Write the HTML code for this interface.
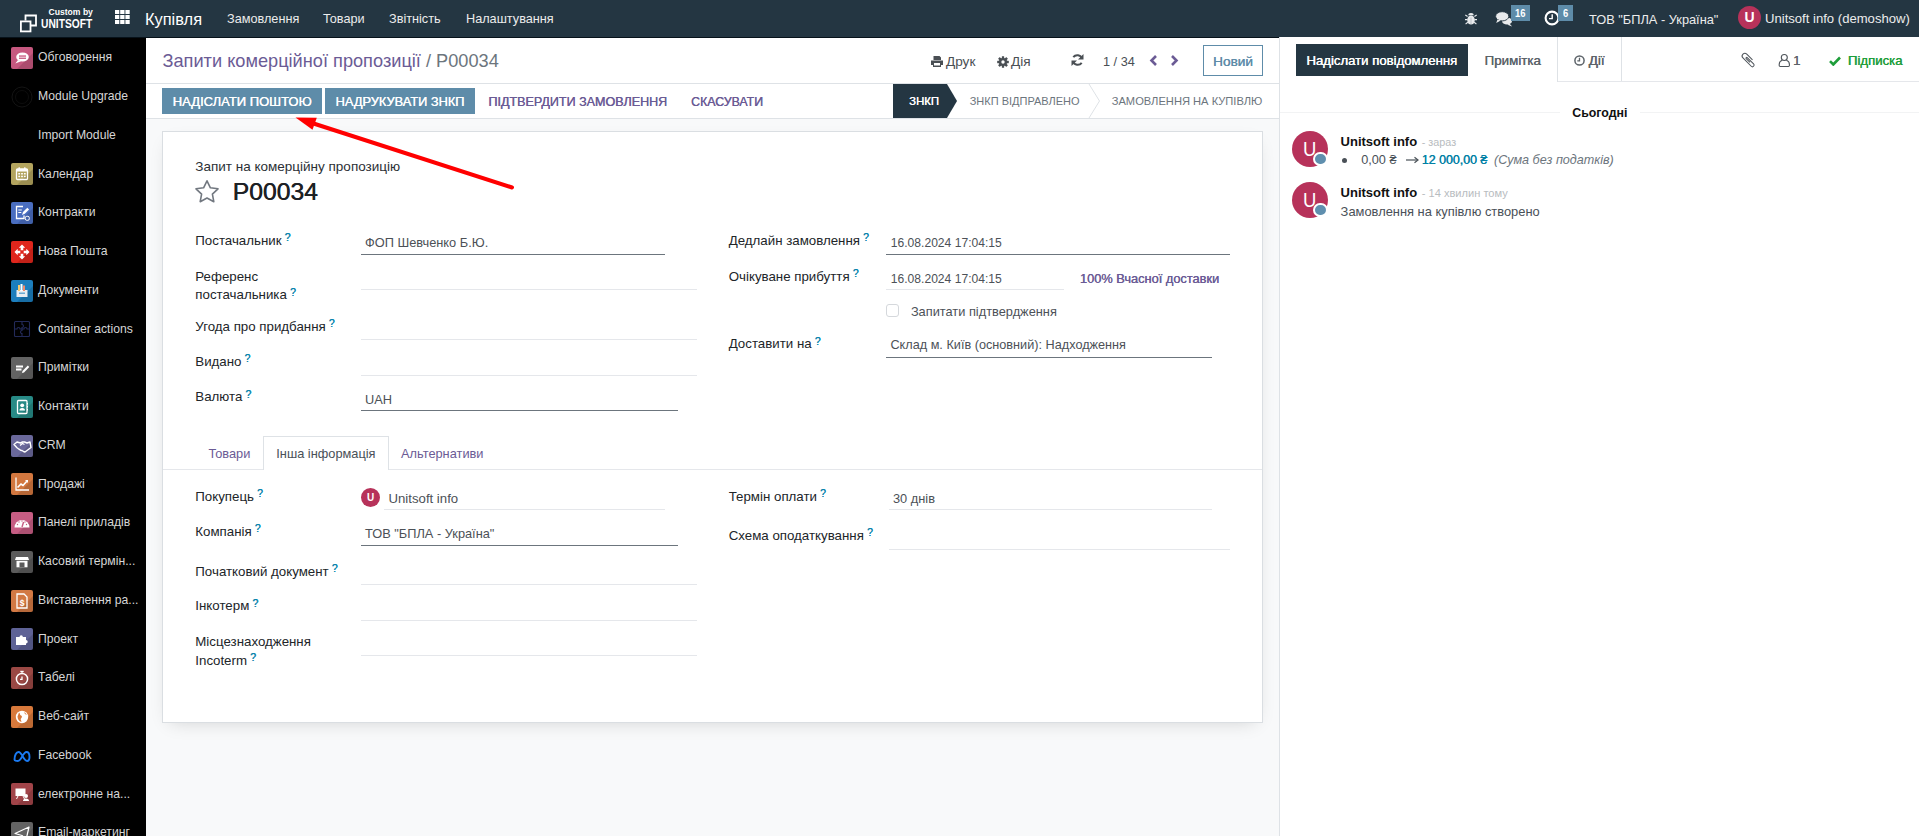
<!DOCTYPE html>
<html><head><meta charset="utf-8"><style>*{box-sizing:border-box;margin:0;padding:0}
html,body{width:1919px;height:836px;overflow:hidden;background:#fff;font-family:"Liberation Sans",sans-serif;font-size:13px;color:#212529}
.t{position:absolute;white-space:nowrap}
.q{position:relative;top:-0.5px;text-shadow:0.35px 0 0 #0a85ad;color:#0a85ad;font-size:10.5px;vertical-align:top;margin-left:3px;font-weight:normal;line-height:1}
</style></head><body>
<div class="t" style="left:0px;top:0px;width:1919px;height:37px;background:#243642;"></div>
<div class="t" style="left:0px;top:37px;width:146px;height:799px;background:#000;"></div>
<div class="t" style="left:146px;top:37px;width:1133px;height:799px;background:#f8f9fa;"></div>
<div class="t" style="left:146px;top:37px;width:1133px;height:82px;background:#fff;"></div>
<div class="t" style="left:146px;top:83px;width:1133px;height:1px;background:#dee2e6;"></div>
<div class="t" style="left:146px;top:118px;width:1133px;height:1px;background:#dee2e6;"></div>
<div class="t" style="left:0px;top:37px;width:1919px;height:1px;background:#07121a;"></div>
<div class="t" style="left:162px;top:131px;width:1101px;height:592px;background:#fff;border:1px solid #dadee2;box-shadow:0 6px 18px -8px rgba(0,0,0,.18)"></div>
<div class="t" style="left:1279px;top:37px;width:640px;height:799px;background:#fff;"></div>
<div class="t" style="left:1279px;top:37px;width:1px;height:799px;background:#dee2e6;"></div>
<div class="t" style="left:48.5px;top:7px;font-size:8.6px;font-weight:bold;color:#fff">Custom by</div>
<div class="t" style="left:40.5px;top:16px;font-size:12.8px;font-weight:bold;color:#fff;transform:scaleX(.8);transform-origin:0 0">UNITSOFT</div>
<svg class="t" style="left:19px;top:14px" width="19" height="19" viewBox="0 0 19 19"><path d="M6.5 6.5V1.5h10.5v10h-5" fill="none" stroke="#fff" stroke-width="1.8"/><rect x="1.9" y="7.4" width="9.6" height="10" fill="none" stroke="#fff" stroke-width="1.8"/></svg>
<svg class="t" style="left:115px;top:10px" width="15" height="15" viewBox="0 0 15 15"><g fill="#fff"><rect x="0.0" y="0.0" width="4.3" height="4" /><rect x="5.2" y="0.0" width="4.3" height="4" /><rect x="10.4" y="0.0" width="4.3" height="4" /><rect x="0.0" y="5.0" width="4.3" height="4" /><rect x="5.2" y="5.0" width="4.3" height="4" /><rect x="10.4" y="5.0" width="4.3" height="4" /><rect x="0.0" y="10.0" width="4.3" height="4" /><rect x="5.2" y="10.0" width="4.3" height="4" /><rect x="10.4" y="10.0" width="4.3" height="4" /></g></svg>
<div class="t" style="left:145px;top:9.91px;font-size:16.4px;color:#fff;">Купівля</div>
<div class="t" style="left:227px;top:11.62px;font-size:12.7px;color:#ececec;">Замовлення</div>
<div class="t" style="left:323px;top:11.62px;font-size:12.7px;color:#ececec;">Товари</div>
<div class="t" style="left:389px;top:11.62px;font-size:12.7px;color:#ececec;">Звітність</div>
<div class="t" style="left:466px;top:11.62px;font-size:12.7px;color:#ececec;">Налаштування</div>
<svg class="t" style="left:1465px;top:12px" width="12" height="13" viewBox="0 0 12 13"><g fill="#e8eaec"><ellipse cx="6" cy="8" rx="3.8" ry="4.6"/><path d="M3.3 3.2a2.7 2.2 0 015.4 0z"/><path d="M0 7h2.5v1.2H0zM9.5 7H12v1.2H9.5zM.3 11.6L2.6 9.8l.6.9-2.3 1.8zM11.7 11.6L9.4 9.8l-.6.9 2.3 1.8zM.6 2.6l2.3 1.5-.6.9L0 3.5zM11.4 2.6L9.1 4.1l.6.9L12 3.5z"/></g><rect x="5.5" y="5.5" width="1" height="6.5" fill="#b9bec3"/></svg>
<svg class="t" style="left:1495px;top:11px" width="18" height="16" viewBox="0 0 18 16"><g fill="#e8eaec"><ellipse cx="12" cy="10" rx="5" ry="3.6"/><path d="M14.5 12.5l2.6 3-4.6-1.8z"/><ellipse cx="7.2" cy="5.3" rx="6.6" ry="4.6" stroke="#243642" stroke-width="0.9"/><path d="M2.5 8.5L1.2 12 5.8 9.6z"/></g></svg>
<div class="t" style="left:1511px;top:5px;width:19px;height:16px;background:#5e8ca9;"></div>
<div class="t" style="left:1515.3px;top:7.2px;font-size:11.5px;font-weight:bold;color:#fff;transform:scaleX(.82);transform-origin:0 0">16</div>
<svg class="t" style="left:1544px;top:10px" width="16" height="16" viewBox="0 0 16 16"><circle cx="8" cy="8" r="6.4" fill="none" stroke="#fff" stroke-width="2.1"/><path d="M8.2 4.2v4.4H5" fill="none" stroke="#fff" stroke-width="1.4"/></svg>
<div class="t" style="left:1558px;top:5px;width:15px;height:16px;background:#5e8ca9;"></div>
<div class="t" style="left:1562.6px;top:7.2px;font-size:11.5px;font-weight:bold;color:#fff;transform:scaleX(.82);transform-origin:0 0">6</div>
<div class="t" style="left:1589px;top:11.52px;font-size:12.8px;color:#ececec;">ТОВ "БПЛА - Україна"</div>
<div class="t" style="left:1738px;top:6px;width:23px;height:23px;border-radius:50%;background:#b7325a;color:#fff;font-size:14px;font-weight:bold;text-align:center;line-height:23px">U</div>
<div class="t" style="left:1765px;top:11.25px;font-size:13.1px;color:#ececec;">Unitsoft info (demoshow)</div>
<div class="t" style="left:11px;top:47.0px;width:22px;height:22px;border-radius:2px;overflow:hidden;background:#c6587f;"><svg width="22" height="22" viewBox="0 0 22 22" style="display:block"><path d="M22 6L6 22h16z" fill="rgba(0,0,0,.13)"/><ellipse cx="11.5" cy="10" rx="6.3" ry="4.6" fill="#fff"/><path d="M7 13l-2.6 3.6 5.6-2.4z" fill="#fff"/><rect x="8" y="8.4" width="7" height="1.3" fill="#c6587f"/><rect x="8" y="10.6" width="7" height="1.3" fill="#c6587f"/></svg></div>
<div class="t" style="left:38px;top:50.28px;font-size:12.2px;color:#d6d6d6;">Обговорення</div>
<div class="t" style="left:11px;top:85.8px;width:22px;height:22px;border-radius:2px;overflow:hidden;"><svg width="22" height="22" viewBox="0 0 22 22" style="display:block"><circle cx="11" cy="11" r="10" fill="none" stroke="#141414" stroke-width="1"/><circle cx="11" cy="11" r="6.5" fill="none" stroke="#101010" stroke-width="0.8"/></svg></div>
<div class="t" style="left:38px;top:89.04px;font-size:12.2px;color:#d6d6d6;">Module Upgrade</div>
<div class="t" style="left:11px;top:124.5px;width:22px;height:22px;border-radius:2px;overflow:hidden;"></div>
<div class="t" style="left:38px;top:127.80px;font-size:12.2px;color:#d6d6d6;">Import Module</div>
<div class="t" style="left:11px;top:163.3px;width:22px;height:22px;border-radius:2px;overflow:hidden;background:#b3a45e;"><svg width="22" height="22" viewBox="0 0 22 22" style="display:block"><path d="M22 6L6 22h16z" fill="rgba(0,0,0,.13)"/><rect x="5.5" y="6" width="11" height="10.5" rx="1" fill="none" stroke="#fff" stroke-width="1.3"/><rect x="5.5" y="6" width="11" height="2.5" fill="#fff"/><g fill="#fff"><rect x="7.3" y="10" width="1.8" height="1.5"/><rect x="10.1" y="10" width="1.8" height="1.5"/><rect x="12.9" y="10" width="1.8" height="1.5"/><rect x="7.3" y="12.7" width="1.8" height="1.5"/><rect x="10.1" y="12.7" width="1.8" height="1.5"/><rect x="12.9" y="12.7" width="1.8" height="1.5"/></g><rect x="7.5" y="4.3" width="1.4" height="2.5" fill="#fff"/><rect x="13.1" y="4.3" width="1.4" height="2.5" fill="#fff"/></svg></div>
<div class="t" style="left:38px;top:166.56px;font-size:12.2px;color:#d6d6d6;">Календар</div>
<div class="t" style="left:11px;top:202.0px;width:22px;height:22px;border-radius:2px;overflow:hidden;background:#4a6ec0;"><svg width="22" height="22" viewBox="0 0 22 22" style="display:block"><path d="M22 6L6 22h16z" fill="rgba(0,0,0,.13)"/><path d="M12 4.5H5.5v12H13v-3" fill="none" stroke="#fff" stroke-width="1.3"/><path d="M7.3 8h3.5M7.3 10.5h3" stroke="#fff" stroke-width="1.2"/><path d="M11 13l1-3 4.3-4.3 1.8 1.8-4.3 4.3z" fill="#fff"/><rect x="14.3" y="14.3" width="4" height="4" rx="1.5" fill="none" stroke="#fff" stroke-width="1"/></svg></div>
<div class="t" style="left:38px;top:205.32px;font-size:12.2px;color:#d6d6d6;">Контракти</div>
<div class="t" style="left:11px;top:240.8px;width:22px;height:22px;border-radius:2px;overflow:hidden;background:#df261c;"><svg width="22" height="22" viewBox="0 0 22 22" style="display:block"><path d="M22 6L6 22h16z" fill="rgba(0,0,0,.13)"/><path d="M11 3.5l3.2 3.2H12.3v2.6h-2.6V6.7H7.8zM11 18.5l-3.2-3.2h1.9v-2.6h2.6v2.6h1.9zM3.5 11l3.2-3.2v1.9h2.6v2.6H6.7v1.9zM18.5 11l-3.2 3.2v-1.9h-2.6V9.7h2.6V7.8z" fill="#fff"/></svg></div>
<div class="t" style="left:38px;top:244.08px;font-size:12.2px;color:#d6d6d6;">Нова Пошта</div>
<div class="t" style="left:11px;top:279.6px;width:22px;height:22px;border-radius:2px;overflow:hidden;background:#1c7ebd;"><svg width="22" height="22" viewBox="0 0 22 22" style="display:block"><path d="M22 6L6 22h16z" fill="rgba(0,0,0,.13)"/><rect x="5.5" y="10" width="11" height="7" fill="#e9edf2"/><rect x="7" y="5" width="2" height="6" fill="#f6c96c"/><rect x="9.5" y="4" width="2" height="7" fill="#fff"/><rect x="12" y="5.5" width="2" height="5.5" fill="#f28b6a"/><rect x="8" y="12.5" width="6" height="1.5" fill="#1c7ebd" opacity=".6"/></svg></div>
<div class="t" style="left:38px;top:282.84px;font-size:12.2px;color:#d6d6d6;">Документи</div>
<div class="t" style="left:11px;top:318.3px;width:22px;height:22px;border-radius:2px;overflow:hidden;"><svg width="22" height="22" viewBox="0 0 22 22" style="display:block"><g fill="none" stroke="#232a58" stroke-width="1.1"><rect x="3.5" y="3.5" width="15" height="15" rx="1"/><path d="M11 3.5V6.5a1.5 1.5 0 010 3V11H9a1.5 1.5 0 00-3 0H3.5"/><path d="M11 18.5V15.5a1.5 1.5 0 010-3V11h2a1.5 1.5 0 013 0h2.5"/></g></svg></div>
<div class="t" style="left:38px;top:321.60px;font-size:12.2px;color:#d6d6d6;">Container actions</div>
<div class="t" style="left:11px;top:357.1px;width:22px;height:22px;border-radius:2px;overflow:hidden;background:#636363;"><svg width="22" height="22" viewBox="0 0 22 22" style="display:block"><path d="M22 6L6 22h16z" fill="rgba(0,0,0,.13)"/><path d="M5 9.5h7M5 12.5h5.5" stroke="#fff" stroke-width="1.8"/><path d="M11.5 14l5.3-5.5 1.5 1.5-5.3 5.5-2 .5z" fill="#fff"/></svg></div>
<div class="t" style="left:38px;top:360.36px;font-size:12.2px;color:#d6d6d6;">Примітки</div>
<div class="t" style="left:11px;top:395.8px;width:22px;height:22px;border-radius:2px;overflow:hidden;background:#278a86;"><svg width="22" height="22" viewBox="0 0 22 22" style="display:block"><path d="M22 6L6 22h16z" fill="rgba(0,0,0,.13)"/><rect x="6.5" y="4.5" width="9.5" height="13" rx="1" fill="none" stroke="#fff" stroke-width="1.3"/><circle cx="11.2" cy="9.3" r="1.9" fill="#fff"/><path d="M8.4 14.5a2.8 2.6 0 015.6 0z" fill="#fff"/><path d="M16.5 7v1.5M16.5 10v1.5M16.5 13v1.5" stroke="#fff" stroke-width="1"/></svg></div>
<div class="t" style="left:38px;top:399.12px;font-size:12.2px;color:#d6d6d6;">Контакти</div>
<div class="t" style="left:11px;top:434.6px;width:22px;height:22px;border-radius:2px;overflow:hidden;background:#6a689a;"><svg width="22" height="22" viewBox="0 0 22 22" style="display:block"><path d="M22 6L6 22h16z" fill="rgba(0,0,0,.13)"/><path d="M3 9.5l3-2.5 3.5 1 2-1h2l2.5 1 3-1 1 5.5-6 4.5-1.5-.5-1.5-1-1.5-.3-1.5-1-2-1.5z" fill="none" stroke="#fff" stroke-width="1.4" stroke-linejoin="round"/><path d="M9 10.5l2.5-2 2 1" fill="none" stroke="#fff" stroke-width="1.3"/></svg></div>
<div class="t" style="left:38px;top:437.88px;font-size:12.2px;color:#d6d6d6;">CRM</div>
<div class="t" style="left:11px;top:473.4px;width:22px;height:22px;border-radius:2px;overflow:hidden;background:#d2773f;"><svg width="22" height="22" viewBox="0 0 22 22" style="display:block"><path d="M22 6L6 22h16z" fill="rgba(0,0,0,.13)"/><path d="M5 4.5v12.5h13" fill="none" stroke="#fff" stroke-width="1.3"/><path d="M6.5 14.5l3.5-3.5 2 1.5 3.8-4.3" fill="none" stroke="#fff" stroke-width="1.6"/><path d="M14 7h3v3z" fill="#fff"/></svg></div>
<div class="t" style="left:38px;top:476.64px;font-size:12.2px;color:#d6d6d6;">Продажі</div>
<div class="t" style="left:11px;top:512.1px;width:22px;height:22px;border-radius:2px;overflow:hidden;background:#c65d83;"><svg width="22" height="22" viewBox="0 0 22 22" style="display:block"><path d="M22 6L6 22h16z" fill="rgba(0,0,0,.13)"/><path d="M3.5 15.5a7.5 7.5 0 0115 0z" fill="#fff"/><path d="M11 15l1.6-5" stroke="#c65d83" stroke-width="1.4"/><g fill="#c65d83"><circle cx="6.5" cy="12.5" r=".7"/><circle cx="8" cy="10" r=".7"/><circle cx="11" cy="9" r=".7"/><circle cx="15.5" cy="12.5" r=".7"/><circle cx="14" cy="10" r=".7"/></g></svg></div>
<div class="t" style="left:38px;top:515.40px;font-size:12.2px;color:#d6d6d6;">Панелі приладів</div>
<div class="t" style="left:11px;top:550.9px;width:22px;height:22px;border-radius:2px;overflow:hidden;background:#5b5b5b;"><svg width="22" height="22" viewBox="0 0 22 22" style="display:block"><path d="M22 6L6 22h16z" fill="rgba(0,0,0,.13)"/><path d="M5 6h12l1 3H4z" fill="#fff"/><rect x="5.5" y="9.8" width="11" height="6.5" fill="#fff"/><rect x="8.5" y="11.5" width="5" height="4.8" fill="#5b5b5b"/></svg></div>
<div class="t" style="left:38px;top:554.16px;font-size:12.2px;color:#d6d6d6;">Касовий термін...</div>
<div class="t" style="left:11px;top:589.6px;width:22px;height:22px;border-radius:2px;overflow:hidden;background:#d27944;"><svg width="22" height="22" viewBox="0 0 22 22" style="display:block"><path d="M22 6L6 22h16z" fill="rgba(0,0,0,.13)"/><path d="M6 4h7l3 3v11H6z" fill="none" stroke="#fff" stroke-width="1.3"/><text x="11" y="15.5" font-size="8.5" font-weight="bold" fill="#fff" text-anchor="middle" font-family="Liberation Sans">$</text></svg></div>
<div class="t" style="left:38px;top:592.92px;font-size:12.2px;color:#d6d6d6;">Виставлення ра...</div>
<div class="t" style="left:11px;top:628.4px;width:22px;height:22px;border-radius:2px;overflow:hidden;background:#5e6296;"><svg width="22" height="22" viewBox="0 0 22 22" style="display:block"><path d="M22 6L6 22h16z" fill="rgba(0,0,0,.13)"/><path d="M5 9h3.5a1.7 1.7 0 113.4 0H15v3a1.7 1.7 0 110 3.4V17H5z" fill="#fff"/></svg></div>
<div class="t" style="left:38px;top:631.68px;font-size:12.2px;color:#d6d6d6;">Проект</div>
<div class="t" style="left:11px;top:667.2px;width:22px;height:22px;border-radius:2px;overflow:hidden;background:#9a4844;"><svg width="22" height="22" viewBox="0 0 22 22" style="display:block"><path d="M22 6L6 22h16z" fill="rgba(0,0,0,.13)"/><circle cx="11" cy="12" r="5.6" fill="none" stroke="#fff" stroke-width="1.5"/><rect x="9.3" y="3.8" width="3.4" height="1.4" fill="#fff"/><path d="M11 5.2v1.2" stroke="#fff" stroke-width="1.3"/><path d="M11 9.5v2.8h-2" fill="none" stroke="#fff" stroke-width="1.3"/></svg></div>
<div class="t" style="left:38px;top:670.44px;font-size:12.2px;color:#d6d6d6;">Табелі</div>
<div class="t" style="left:11px;top:705.9px;width:22px;height:22px;border-radius:2px;overflow:hidden;background:#d8793b;"><svg width="22" height="22" viewBox="0 0 22 22" style="display:block"><path d="M22 6L6 22h16z" fill="rgba(0,0,0,.13)"/><circle cx="11" cy="11" r="6.2" fill="#fff"/><path d="M8 6.5c1.5 1 .5 2.5 2 3s1 2 0 3 .5 2 .5 3.5c-2.5-.5-4-3-4-5.5z M13.5 6c-.5 1.5 1 2.5 2.5 3" fill="#d8793b"/></svg></div>
<div class="t" style="left:38px;top:709.20px;font-size:12.2px;color:#d6d6d6;">Веб-сайт</div>
<div class="t" style="left:11px;top:744.7px;width:22px;height:22px;border-radius:2px;overflow:hidden;"><svg width="22" height="22" viewBox="0 0 22 22" style="display:block"><path d="M3.5 14.5c0-4 1.7-7.5 4-7.5 2.5 0 4.5 5 5.5 6.5s2 2.5 3 2.5c1.5 0 2.5-1.5 2.5-4s-1-5-3-5c-2.5 0-4.5 5-5.5 6.5s-2 2.5-3 2.5c-2 0-3.5-.5-3.5-1.5z" fill="none" stroke="#1a7af2" stroke-width="1.9"/></svg></div>
<div class="t" style="left:38px;top:747.96px;font-size:12.2px;color:#d6d6d6;">Facebook</div>
<div class="t" style="left:11px;top:783.4px;width:22px;height:22px;border-radius:2px;overflow:hidden;background:#a14449;"><svg width="22" height="22" viewBox="0 0 22 22" style="display:block"><path d="M22 6L6 22h16z" fill="rgba(0,0,0,.13)"/><rect x="4.5" y="5.5" width="10" height="7.5" fill="#fff"/><path d="M7 13l-1.5 3M12 13l1.5 3" stroke="#fff" stroke-width="1"/><circle cx="15" cy="13" r="2" fill="#fff"/><path d="M12 18a3 2.5 0 016 0z" fill="#fff"/></svg></div>
<div class="t" style="left:38px;top:786.72px;font-size:12.2px;color:#d6d6d6;">електронне на...</div>
<div class="t" style="left:11px;top:822.2px;width:22px;height:22px;border-radius:2px;overflow:hidden;background:#636363;"><svg width="22" height="22" viewBox="0 0 22 22" style="display:block"><path d="M22 6L6 22h16z" fill="rgba(0,0,0,.13)"/><path d="M4 11.5L18 5l-3 13-4-4.5z M11 13.5V17l1.8-2" fill="none" stroke="#fff" stroke-width="1.2" stroke-linejoin="round"/></svg></div>
<div class="t" style="left:38px;top:825.48px;font-size:12.2px;color:#d6d6d6;">Email-маркетинг</div>
<div class="t" style="left:162.5px;top:50.76px;font-size:18.2px;color:#6b5b95;">Запити комерційної пропозиції <span style="color:#6c757d">/ P00034</span></div>
<svg class="t" style="left:931px;top:56px" width="12" height="11" viewBox="0 0 12 11"><path d="M2.5 0h6l1.5 1.5V4h-7.5z M0 4.5h12v4.5h-2V11H2V9H0z" fill="#4a4f54"/><rect x="3" y="7" width="6" height="2.5" fill="#fff"/></svg>
<div class="t" style="left:946px;top:53.79px;font-size:13.6px;color:#4a4f54;">Друк</div>
<svg class="t" style="left:996.5px;top:55.5px" width="12" height="12" viewBox="0 0 12 12"><g fill="#4a4f54"><circle cx="6" cy="6" r="4.1"/><rect x="4.85" y="0.2" width="2.3" height="2.8" rx="0.3" transform="rotate(0 6 6)"/><rect x="4.85" y="0.2" width="2.3" height="2.8" rx="0.3" transform="rotate(45 6 6)"/><rect x="4.85" y="0.2" width="2.3" height="2.8" rx="0.3" transform="rotate(90 6 6)"/><rect x="4.85" y="0.2" width="2.3" height="2.8" rx="0.3" transform="rotate(135 6 6)"/><rect x="4.85" y="0.2" width="2.3" height="2.8" rx="0.3" transform="rotate(180 6 6)"/><rect x="4.85" y="0.2" width="2.3" height="2.8" rx="0.3" transform="rotate(225 6 6)"/><rect x="4.85" y="0.2" width="2.3" height="2.8" rx="0.3" transform="rotate(270 6 6)"/><rect x="4.85" y="0.2" width="2.3" height="2.8" rx="0.3" transform="rotate(315 6 6)"/></g><circle cx="6" cy="6" r="1.7" fill="#fff"/></svg>
<div class="t" style="left:1011px;top:53.79px;font-size:13.6px;color:#4a4f54;">Дія</div>
<svg class="t" style="left:1071px;top:54px" width="13" height="12" viewBox="0 0 13 12"><path d="M11 4.5A5 5 0 002.3 3.2" fill="none" stroke="#4a4f54" stroke-width="2"/><path d="M12.5 0v5.5H7z" fill="#4a4f54"/><path d="M2 7.5a5 5 0 008.7 1.3" fill="none" stroke="#4a4f54" stroke-width="2"/><path d="M.5 12V6.5H6z" fill="#4a4f54"/></svg>
<div class="t" style="left:1103px;top:54.62px;font-size:12.7px;color:#4a4f54;">1 / 34</div>
<svg class="t" style="left:1149px;top:55px" width="9" height="11" viewBox="0 0 9 11"><path d="M7 1L2.5 5.5 7 10" fill="none" stroke="#6b5b95" stroke-width="2.6"/></svg>
<svg class="t" style="left:1170px;top:55px" width="9" height="11" viewBox="0 0 9 11"><path d="M2 1l4.5 4.5L2 10" fill="none" stroke="#6b5b95" stroke-width="2.6"/></svg>
<div class="t" style="left:1203px;top:45px;width:60px;height:31px;background:transparent;border:1px solid #5e8ca9"></div>
<div class="t" style="left:1213px;top:54.49px;font-size:13.6px;color:#5e8ca9;text-shadow:0.35px 0 0 #5e8ca9;">Новий</div>
<div class="t" style="left:162px;top:88px;width:160px;height:26px;background:#5e8ca9;"></div>
<div class="t" style="left:172.6px;top:94.04px;font-size:13px;color:#fff;text-shadow:0.35px 0 0 #fff;">НАДІСЛАТИ ПОШТОЮ</div>
<div class="t" style="left:325px;top:88px;width:150px;height:26px;background:#5e8ca9;"></div>
<div class="t" style="left:335.5px;top:94.22px;font-size:12.8px;color:#fff;text-shadow:0.35px 0 0 #fff;">НАДРУКУВАТИ ЗНКП</div>
<div class="t" style="left:488.3px;top:94.55px;font-size:12.55px;color:#6b5b95;text-shadow:0.35px 0 0 #6b5b95;">ПІДТВЕРДИТИ ЗАМОВЛЕННЯ</div>
<div class="t" style="left:691px;top:94.74px;font-size:12.35px;color:#6b5b95;text-shadow:0.35px 0 0 #6b5b95;">СКАСУВАТИ</div>
<svg class="t" style="left:893px;top:84px" width="65" height="34" viewBox="0 0 65 34"><path d="M0 0h54l10 17-10 17H0z" fill="#243642"/></svg>
<div class="t" style="left:909px;top:94.51px;font-size:11.4px;color:#fff;text-shadow:0.35px 0 0 #fff;">ЗНКП</div>
<div class="t" style="left:969.7px;top:94.88px;font-size:11px;color:#6c757d;">ЗНКП ВІДПРАВЛЕНО</div>
<svg class="t" style="left:1088px;top:84px" width="13" height="34" viewBox="0 0 13 34"><path d="M1 0l10.5 17L1 34" fill="none" stroke="#dee2e6" stroke-width="1"/></svg>
<div class="t" style="left:1111.7px;top:94.74px;font-size:11.15px;color:#6c757d;">ЗАМОВЛЕННЯ НА КУПІВЛЮ</div>
<div class="t" style="left:195.3px;top:158.58px;font-size:13.5px;color:#2b3035;">Запит на комерційну пропозицію</div>
<svg class="t" style="left:194px;top:179px" width="26" height="24" viewBox="0 0 26 24"><path d="M13 1.8l3.4 7 7.6 1-5.6 5.3 1.4 7.6L13 19l-6.8 3.7 1.4-7.6L2 9.8l7.6-1z" fill="none" stroke="#727880" stroke-width="1.6" stroke-linejoin="round"/></svg>
<div class="t" style="left:232.6px;top:178.08px;font-size:24.7px;color:#1d2125;text-shadow:0.45px 0 0 #1d2125;">P00034</div>
<div class="t" style="left:195.3px;top:232.76px;font-size:13.3px;color:#212529;">Постачальник<sup class="q">?</sup></div>
<div class="t" style="left:365px;top:235.22px;font-size:12.8px;color:#4c5157;">ФОП Шевченко Б.Ю.</div>
<div class="t" style="left:361px;top:254px;width:304px;height:1px;background:#6c757d;"></div>
<div class="t" style="left:195.3px;top:268.76px;font-size:13.3px;color:#212529;">Референс</div>
<div class="t" style="left:195.3px;top:287.26px;font-size:13.3px;color:#212529;">постачальника<sup class="q">?</sup></div>
<div class="t" style="left:361px;top:289px;width:336px;height:1px;background:#e5e7eb;"></div>
<div class="t" style="left:195.3px;top:318.56px;font-size:13.3px;color:#212529;">Угода про придбання<sup class="q">?</sup></div>
<div class="t" style="left:361px;top:339px;width:336px;height:1px;background:#e5e7eb;"></div>
<div class="t" style="left:195.3px;top:353.66px;font-size:13.3px;color:#212529;">Видано<sup class="q">?</sup></div>
<div class="t" style="left:361px;top:375px;width:336px;height:1px;background:#e5e7eb;"></div>
<div class="t" style="left:195.3px;top:389.46px;font-size:13.3px;color:#212529;">Валюта<sup class="q">?</sup></div>
<div class="t" style="left:365px;top:392.22px;font-size:12.8px;color:#4c5157;">UAH</div>
<div class="t" style="left:361px;top:410px;width:317px;height:1px;background:#6c757d;"></div>
<div class="t" style="left:728.7px;top:232.76px;font-size:13.3px;color:#212529;">Дедлайн замовлення<sup class="q">?</sup></div>
<div class="t" style="left:890.8px;top:235.67px;font-size:12.1px;color:#4c5157;">16.08.2024 17:04:15</div>
<div class="t" style="left:886px;top:254px;width:344px;height:1px;background:#6c757d;"></div>
<div class="t" style="left:728.7px;top:268.76px;font-size:13.3px;color:#212529;">Очікуване прибуття<sup class="q">?</sup></div>
<div class="t" style="left:890.8px;top:271.67px;font-size:12.1px;color:#4c5157;">16.08.2024 17:04:15</div>
<div class="t" style="left:886px;top:289px;width:178px;height:1px;background:#e5e7eb;"></div>
<div class="t" style="left:1079.8px;top:271.22px;font-size:12.8px;color:#6b5b95;text-shadow:0.35px 0 0 #6b5b95;">100% Вчасної доставки</div>
<div class="t" style="left:886px;top:304px;width:13px;height:13px;background:#fff;border:1px solid #d5d8dc;border-radius:3px"></div>
<div class="t" style="left:910.9px;top:303.82px;font-size:12.8px;color:#4c5157;">Запитати підтвердження</div>
<div class="t" style="left:728.7px;top:336.36px;font-size:13.3px;color:#212529;">Доставити на<sup class="q">?</sup></div>
<div class="t" style="left:890.4px;top:338.32px;font-size:12.7px;color:#4c5157;">Склад м. Київ (основний): Надходження</div>
<div class="t" style="left:886px;top:357px;width:326px;height:1px;background:#6c757d;"></div>
<div class="t" style="left:163px;top:469px;width:1099px;height:1px;background:#e5e7eb;"></div>
<div class="t" style="left:263px;top:436px;width:126px;height:34px;background:#fff;border:1px solid #dee2e6;border-bottom:none"></div>
<div class="t" style="left:208.4px;top:446.42px;font-size:12.8px;color:#6b5b95;">Товари</div>
<div class="t" style="left:276.3px;top:446.42px;font-size:12.8px;color:#495057;">Інша інформація</div>
<div class="t" style="left:401px;top:446.42px;font-size:12.8px;color:#6b5b95;">Альтернативи</div>
<div class="t" style="left:195.3px;top:488.76px;font-size:13.3px;color:#212529;">Покупець<sup class="q">?</sup></div>
<div class="t" style="left:361px;top:488px;width:19px;height:19px;border-radius:50%;background:#b7325a;color:#fff;font-size:10px;font-weight:bold;text-align:center;line-height:19px">U</div>
<div class="t" style="left:388.5px;top:491.06px;font-size:13.2px;color:#4c5157;">Unitsoft info</div>
<div class="t" style="left:384px;top:509px;width:281px;height:1px;background:#e5e7eb;"></div>
<div class="t" style="left:195.3px;top:523.76px;font-size:13.3px;color:#212529;">Компанія<sup class="q">?</sup></div>
<div class="t" style="left:365px;top:526.22px;font-size:12.8px;color:#4c5157;">ТОВ "БПЛА - Україна"</div>
<div class="t" style="left:361px;top:545px;width:317px;height:1px;background:#6c757d;"></div>
<div class="t" style="left:195.3px;top:563.76px;font-size:13.3px;color:#212529;">Початковий документ<sup class="q">?</sup></div>
<div class="t" style="left:361px;top:584px;width:336px;height:1px;background:#e5e7eb;"></div>
<div class="t" style="left:195.3px;top:598.36px;font-size:13.3px;color:#212529;">Інкотерм<sup class="q">?</sup></div>
<div class="t" style="left:361px;top:620px;width:336px;height:1px;background:#e5e7eb;"></div>
<div class="t" style="left:195.3px;top:634.36px;font-size:13.3px;color:#212529;">Місцезнаходження</div>
<div class="t" style="left:195.3px;top:652.76px;font-size:13.3px;color:#212529;">Incoterm<sup class="q">?</sup></div>
<div class="t" style="left:361px;top:655px;width:336px;height:1px;background:#e5e7eb;"></div>
<div class="t" style="left:728.7px;top:488.76px;font-size:13.3px;color:#212529;">Термін оплати<sup class="q">?</sup></div>
<div class="t" style="left:893px;top:490.82px;font-size:12.8px;color:#4c5157;">30 днів</div>
<div class="t" style="left:889px;top:509px;width:323px;height:1px;background:#e5e7eb;"></div>
<div class="t" style="left:728.7px;top:527.76px;font-size:13.3px;color:#212529;">Схема оподаткування<sup class="q">?</sup></div>
<div class="t" style="left:889px;top:549px;width:341px;height:1px;background:#e5e7eb;"></div>
<div class="t" style="left:1296px;top:44px;width:172px;height:32px;background:#243642;"></div>
<div class="t" style="left:1306.3px;top:53.38px;font-size:13.17px;color:#fff;text-shadow:0.35px 0 0 #fff;">Надіслати повідомлення</div>
<div class="t" style="left:1484.5px;top:53.22px;font-size:13.35px;color:#5c6369;text-shadow:0.35px 0 0 #5c6369;">Примітка</div>
<div class="t" style="left:1557px;top:37px;width:65px;height:45px;background:#fff;border:1px solid #dee2e6;border-top:none;border-bottom:none"></div>
<div class="t" style="left:1557px;top:81px;width:362px;height:1px;background:#e5e7eb;"></div>
<div class="t" style="left:1557px;top:81px;width:1px;height:1px;background:#dee2e6;"></div>
<svg class="t" style="left:1574px;top:55px" width="11" height="11" viewBox="0 0 11 11"><circle cx="5.5" cy="5.5" r="4.6" fill="none" stroke="#5c6369" stroke-width="1.5"/><path d="M5.5 2.8v3H3.3" fill="none" stroke="#5c6369" stroke-width="1.3"/></svg>
<div class="t" style="left:1588.6px;top:53.08px;font-size:13.5px;color:#5c6369;text-shadow:0.35px 0 0 #5c6369;">Дії</div>
<svg class="t" style="left:1739px;top:50px" width="20" height="20" viewBox="0 0 20 20"><g transform="translate(10,10.2) rotate(-45) scale(0.9)"><path d="M3 2.5V-6.5A3 3 0 0 0 -3 -6.5V6.5A1.85 1.85 0 0 0 0.7 6.5V-3.5A0.8 0.8 0 0 0 -0.9 -3.5V2.5" fill="none" stroke="#4f555b" stroke-width="1.15"/></g></svg>
<svg class="t" style="left:1778px;top:53px" width="13" height="15" viewBox="0 0 13 15"><circle cx="6.3" cy="4.5" r="3.0" fill="none" stroke="#4f555b" stroke-width="1.1"/><path d="M4.2 7.3C2.4 7.9 1.2 9.3 1.2 11.2V12.6Q1.2 13.5 2.2 13.5H10.4Q11.4 13.5 11.4 12.6V11.2C11.4 9.3 10.2 7.9 8.4 7.3" fill="none" stroke="#4f555b" stroke-width="1.1"/></svg>
<div class="t" style="left:1793px;top:53.26px;font-size:13.3px;color:#5c6369;text-shadow:0.35px 0 0 #5c6369;">1</div>
<svg class="t" style="left:1829px;top:56px" width="12" height="10" viewBox="0 0 12 10"><path d="M1 5.2l3.3 3.3L11 1.5" fill="none" stroke="#1e9e3a" stroke-width="2.6"/></svg>
<div class="t" style="left:1847.8px;top:53.36px;font-size:13.2px;color:#1e9e3a;text-shadow:0.35px 0 0 #1e9e3a;">Підписка</div>
<div class="t" style="left:1280px;top:112px;width:280px;height:1px;background:#f2f3f4;"></div>
<div class="t" style="left:1640px;top:112px;width:279px;height:1px;background:#f2f3f4;"></div>
<div class="t" style="left:1572.3px;top:105.94px;font-size:12.35px;color:#111;font-weight:bold;">Сьогодні</div>
<div class="t" style="left:1292px;top:131px;width:36px;height:36px;border-radius:50%;background:#b7325a;color:#fff;font-size:21px;text-align:center;line-height:36px"><span style="display:inline-block;transform:scaleX(.88)">U</span></div>
<div class="t" style="left:1313px;top:151.5px;width:14.5px;height:14.5px;border-radius:50%;background:#5f8fae;border:2.3px solid #fff"></div>
<div class="t" style="left:1340.6px;top:134.04px;font-size:13px;color:#111;font-weight:bold;">Unitsoft info</div>
<div class="t" style="left:1421.7px;top:136.06px;font-size:10.8px;color:#b8bcc0;">- зараз</div>
<div class="t" style="left:1342px;top:158px;width:5px;height:5px;border-radius:50%;background:#495057"></div>
<div class="t" style="left:1361.2px;top:152.92px;font-size:12.7px;color:#495057;">0,00 ₴</div>
<svg class="t" style="left:1406px;top:156px" width="13" height="8" viewBox="0 0 13 8"><path d="M0 4h11" stroke="#495057" stroke-width="1.2"/><path d="M8.5 1.3L12 4 8.5 6.7" fill="none" stroke="#495057" stroke-width="1.2"/></svg>
<div class="t" style="left:1421.7px;top:153.19px;font-size:12.4px;color:#0180a5;text-shadow:0.35px 0 0 #0180a5;">12 000,00 ₴</div>
<div class="t" style="left:1494px;top:153.01px;font-size:12.6px;color:#6c757d;font-style:italic;">(Сума без податків)</div>
<div class="t" style="left:1292px;top:182px;width:36px;height:36px;border-radius:50%;background:#b7325a;color:#fff;font-size:21px;text-align:center;line-height:36px"><span style="display:inline-block;transform:scaleX(.88)">U</span></div>
<div class="t" style="left:1313px;top:202.5px;width:14.5px;height:14.5px;border-radius:50%;background:#5f8fae;border:2.3px solid #fff"></div>
<div class="t" style="left:1340.6px;top:185.14px;font-size:13px;color:#111;font-weight:bold;">Unitsoft info</div>
<div class="t" style="left:1421.7px;top:186.89px;font-size:11.1px;color:#b8bcc0;">- 14 хвилин тому</div>
<div class="t" style="left:1340.6px;top:203.63px;font-size:12.9px;color:#495057;">Замовлення на купівлю створено</div>
<svg class="t" style="left:0;top:0" width="1919" height="836" viewBox="0 0 1919 836"><line x1="512" y1="187.5" x2="312" y2="123" stroke="#ff0000" stroke-width="4" stroke-linecap="round"/><path d="M295.5 117.5L316.8 117.8 312.5 129.8z" fill="#ff0000"/></svg>
</body></html>
